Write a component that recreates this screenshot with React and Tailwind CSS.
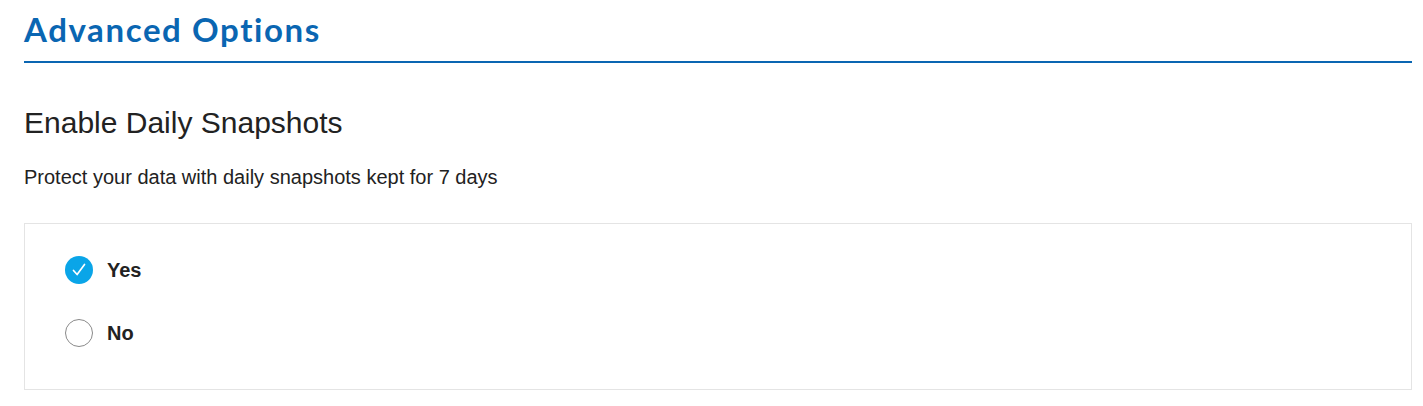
const Radio = ({ label, checked }) => (
  <label className="flex items-center gap-[14px] cursor-pointer">
    {checked ? (
      <span className="w-7 h-7 rounded-full bg-[#0aa5e8] flex items-center justify-center">
        <svg width="18" height="18" viewBox="0 0 18 18" fill="none">
          <path d="M3.5 9.5l3.6 4L14.5 3.5" stroke="#fff" strokeWidth="1.7" strokeLinecap="round" strokeLinejoin="round" />
        </svg>
      </span>
    ) : (
      <span className="w-7 h-7 rounded-full border border-[#8a8a8a] bg-white" />
    )}
    <span className="text-[20px] font-bold text-[#222]">{label}</span>
  </label>
)

export default function App() {
  return (
    <div className="bg-white min-h-screen pl-6 pr-[11px] font-['Liberation_Sans',Arial,sans-serif]">
      <h1 className="pt-[9px] h-[63px] border-b-2 border-[#0a66b2] text-[33px] leading-[40px] font-bold text-[#0a66b2] font-['Lato',sans-serif] tracking-[1.6px]">
        Advanced Options
      </h1>
      <h2 className="mt-[42px] text-[30px] leading-[36px] text-[#222]">Enable Daily Snapshots</h2>
      <p className="mt-[23px] text-[20px] leading-[26px] text-[#222]">
        Protect your data with daily snapshots kept for 7 days
      </p>
      <div className="mt-[33px] h-[167px] border border-[#e4e4e4] pl-[40px] pt-[31px] flex flex-col gap-[33px]">
        <Radio label="Yes" checked />
        <Radio label="No" />
      </div>
    </div>
  )
}
